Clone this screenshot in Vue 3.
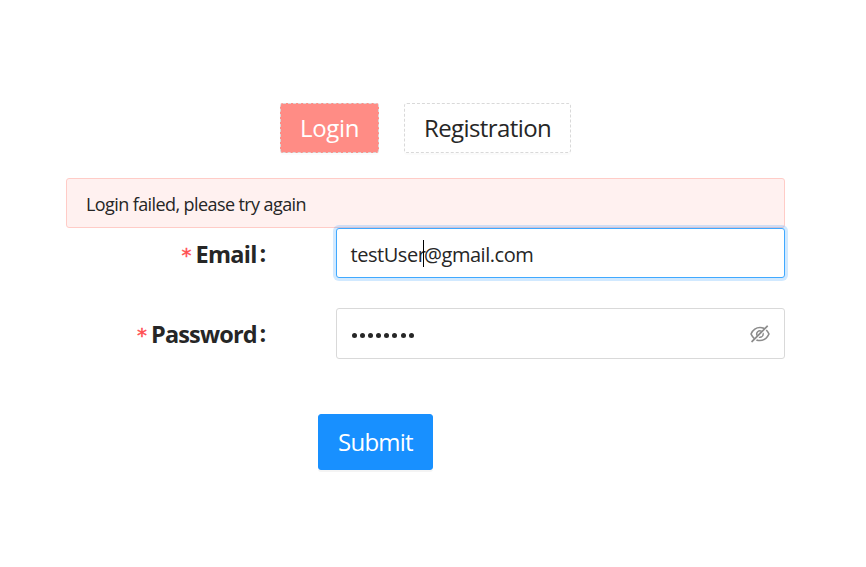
<script setup>
import { ref } from 'vue'

const tab = ref('login')
</script>

<template>
  <main class="page">
    <nav class="tabs">
      <button class="tab login" :class="{ active: tab === 'login' }" @click="tab = 'login'"><span>Login</span></button>
      <button class="tab registration" :class="{ active: tab === 'registration' }" @click="tab = 'registration'"><span>Registration</span></button>
    </nav>
    <div class="alert" role="alert"><span>Login failed, please try again</span></div>
    <form class="form" @submit.prevent>
      <div class="row">
        <div class="label"><i class="star">*</i><span class="name email">Email</span><span class="colon">:</span></div>
        <div class="field focused"><span class="value">testUser</span><span class="caret"></span><span class="value rest">@gmail.com</span></div>
      </div>
      <div class="row second">
        <div class="label"><i class="star">*</i><span class="name password">Password</span><span class="colon">:</span></div>
        <div class="field">
          <span class="dots"><i v-for="n in 8" :key="n"></i></span>
          <svg class="eye" viewBox="64 64 896 896" fill="currentColor">
            <path d="M942.2 486.2Q889.47 375.11 816.7 305l-50.88 50.88C807.31 395.53 843.45 447.4 874.7 512 791.5 684.2 673.4 766 512 766q-72.67 0-133.87-22.38L323 798.75Q408 838 512 838q288.3 0 430.2-300.3a60.29 60.29 0 000-51.5zm-63.57-320.64L836 122.88a8 8 0 00-11.32 0L715.31 232.2Q624.86 186 512 186q-288.3 0-430.2 300.3a60.3 60.3 0 000 51.5q56.69 119.4 136.5 191.41L112.48 835a8 8 0 000 11.31L155.17 889a8 8 0 0011.31 0l712.15-712.12a8 8 0 000-11.32zM149.3 512C232.6 339.8 350.7 258 512 258c54.54 0 104.13 9.36 149.12 28.39l-70.3 70.3a176 176 0 00-238.13 238.13l-83.42 83.42C223.1 637.49 183.3 582.28 149.3 512zm246.7 0a112.11 112.11 0 01146.2-106.69L401.31 546.2A112 112 0 01396 512z" />
            <path d="M508 624c-3.46 0-6.87-.16-10.25-.47l-52.82 52.82a176.09 176.09 0 00227.42-227.42l-52.82 52.82c.31 3.38.47 6.79.47 10.25a111.94 111.94 0 01-112 112z" />
          </svg>
        </div>
      </div>
      <button class="submit"><span>Submit</span></button>
    </form>
  </main>
</template>

<style>
body {
  background: #fff;
}
</style>

<style scoped>
.page {
  box-sizing: border-box;
  width: 866px;
  height: 567px;
  padding: 103px 81px 0 66px;
  font-family: "Segoe UI", "Open Sans", "Noto Sans", sans-serif;
  color: #262626;
}
button {
  box-sizing: border-box;
  margin: 0;
  padding: 0 0 0 19px;
  text-align: left;
  white-space: nowrap;
  font-family: inherit;
  font-size: 24px;
  line-height: 48px;
}
.tabs {
  display: flex;
  gap: 25px;
  padding-left: 214px;
}
.tab {
  height: 50px;
  border: 1px dashed #d9d9d9;
  border-radius: 3px;
  background: #fff;
  color: #262626;
  box-shadow: 0 2px 0 rgba(0, 0, 0, 0.015);
}
.tab.active {
  background: #ff8c85;
  color: #fff;
}
.login {
  width: 99px;
  letter-spacing: -0.3px;
}
.registration {
  width: 167px;
  letter-spacing: -0.6px;
}
.alert {
  box-sizing: border-box;
  height: 50px;
  margin-top: 25px;
  padding-left: 19px;
  border: 1px solid #ffccc7;
  border-radius: 3px;
  background: #fff1f0;
  font-size: 18px;
  line-height: 51px;
  letter-spacing: -0.59px;
}
.row {
  display: flex;
  justify-content: space-between;
}
.second {
  margin-top: 30px;
}
.label {
  display: flex;
  justify-content: flex-end;
  width: 202px;
  height: 50px;
  font-size: 23.5px;
  line-height: 52px;
  font-weight: 700;
}
.second .label {
  line-height: 53px;
}
.name {
  flex: none;
}
.email {
  width: 64px;
  letter-spacing: -0.7px;
}
.password {
  width: 108.5px;
  letter-spacing: -0.85px;
}
.star {
  margin-right: 4px;
  font-family: "DejaVu Sans", sans-serif;
  font-size: 20px;
  font-weight: 400;
  font-style: normal;
  line-height: 55px;
  color: #ff4d4f;
  -webkit-text-stroke: 0.4px #ff4d4f;
}
.colon {
  width: 8.5px;
  line-height: 50px;
}
.field {
  box-sizing: border-box;
  display: flex;
  align-items: center;
  width: 449px;
  height: 50px;
  padding: 0 14px;
  border: 1px solid #d9d9d9;
  border-radius: 3px;
  background: #fff;
  font-size: 20px;
}
.second .field {
  height: 51px;
}
.field.focused {
  padding-left: 13.5px;
  border-color: #40a9ff;
  box-shadow: 0 0 0 3px rgba(24, 144, 255, 0.2);
}
.value {
  width: 72.5px;
  padding-top: 4px;
  white-space: nowrap;
  line-height: 48px;
  letter-spacing: -0.45px;
}
.caret {
  width: 1px;
  height: 27px;
  background: #000;
}
.dots {
  display: flex;
  gap: 3.1px;
  padding: 3px 0 0 1px;
}
.dots i {
  width: 5px;
  height: 5px;
  border-radius: 50%;
  background: #262626;
}
.eye {
  width: 20px;
  height: 20px;
  margin-left: auto;
  color: #8c8c8c;
}
.submit {
  display: block;
  width: 115px;
  height: 56px;
  margin: 55px 0 0 252px;
  border: 1px solid #1890ff;
  border-radius: 3px;
  background: #1890ff;
  color: #fff;
  line-height: 54px;
  letter-spacing: -0.75px;
  box-shadow: 0 2px 0 rgba(0, 0, 0, 0.045);
}
</style>
